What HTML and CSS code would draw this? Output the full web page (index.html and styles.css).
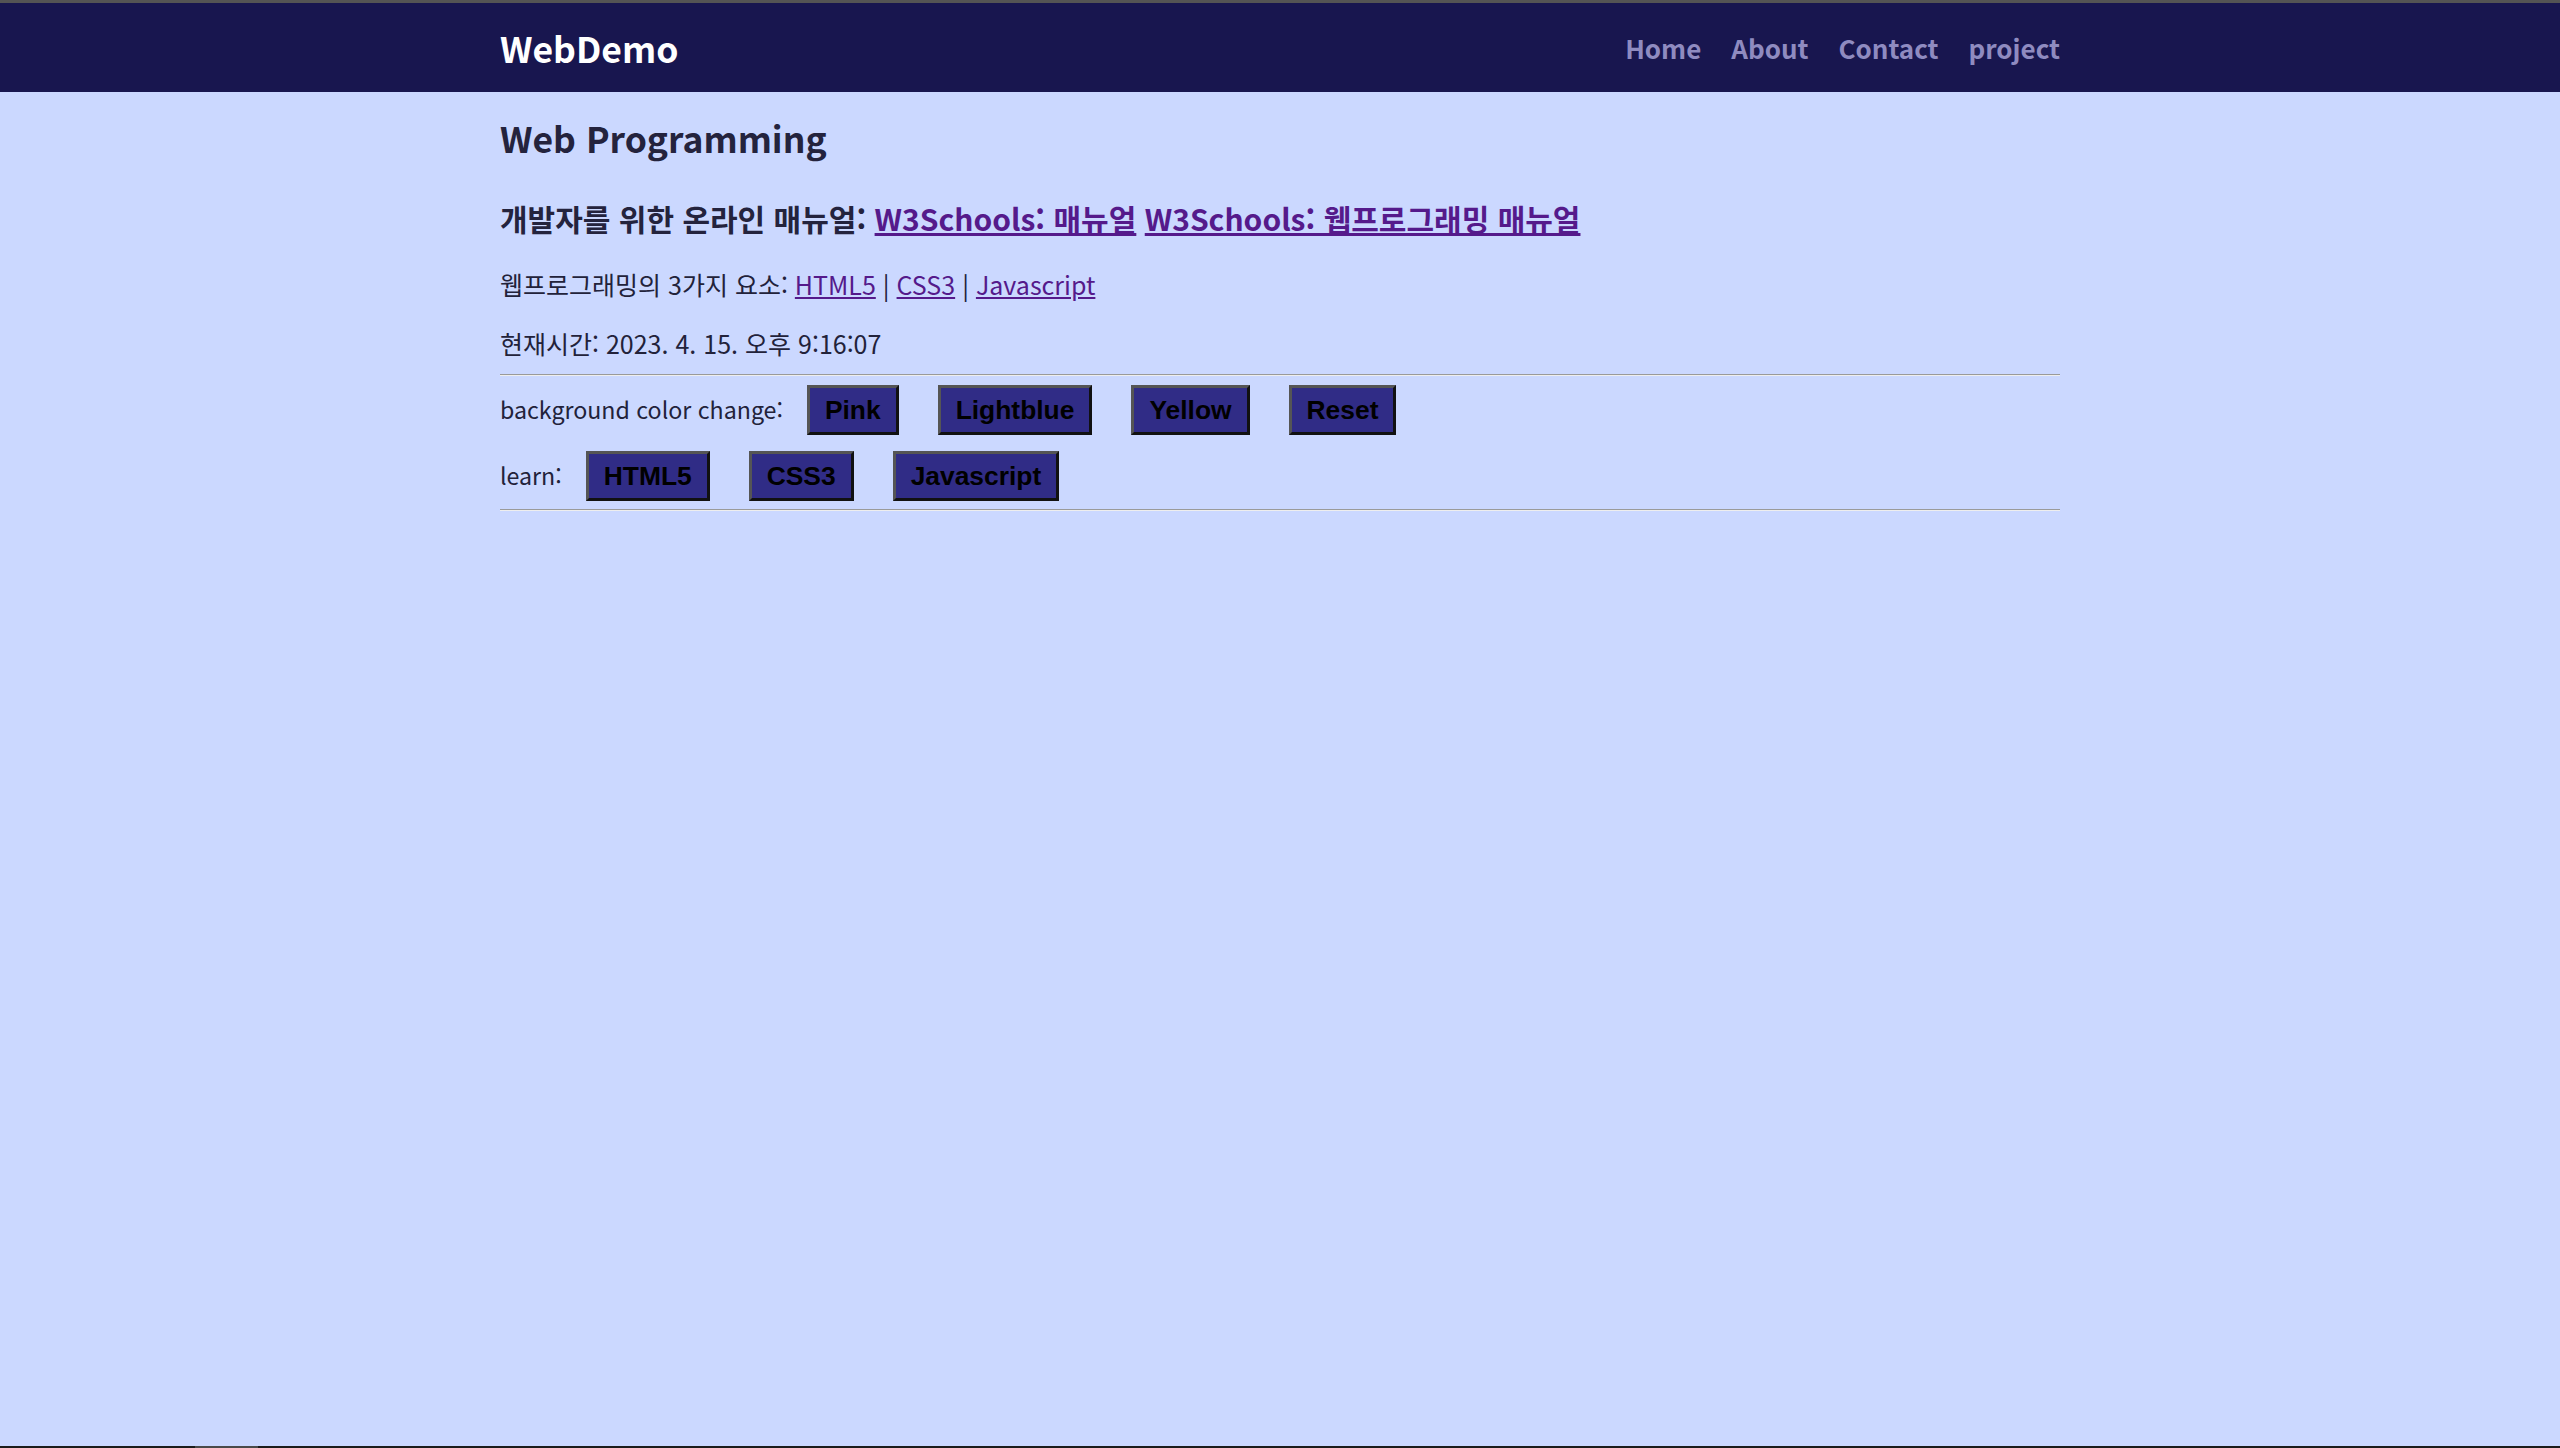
FILE: index.html
```html
<!DOCTYPE html>
<html lang="ko">
<head>
<meta charset="utf-8">
<title>WebDemo</title>
<link rel="stylesheet" href="styles.css">
</head>
<body>
<nav class="navbar">
  <div class="container nav-inner">
    <a class="brand" href="#">WebDemo</a>
    <ul class="nav-links">
      <li><a href="#">Home</a></li>
      <li><a href="#">About</a></li>
      <li><a href="#">Contact</a></li>
      <li><a href="#">project</a></li>
    </ul>
  </div>
</nav>
<main class="container content">
  <h1 class="title">Web Programming</h1>
  <h2 class="manual">개발자를 위한 온라인 매뉴얼: <a href="#">W3Schools: 매뉴얼</a> <a href="#">W3Schools: 웹프로그래밍 매뉴얼</a></h2>
  <p class="line elements">웹프로그래밍의 3가지 요소: <a href="#">HTML5</a> | <a href="#">CSS3</a> | <a href="#">Javascript</a></p>
  <p class="line time">현재시간: 2023. 4. 15. 오후 9:16:07</p>
  <hr class="rule">
  <div class="btn-row first-row">
    <span class="label">background color change:</span>
    <button class="btn">Pink</button>
    <button class="btn">Lightblue</button>
    <button class="btn">Yellow</button>
    <button class="btn">Reset</button>
  </div>
  <div class="btn-row second-row">
    <span class="label">learn:</span>
    <button class="btn">HTML5</button>
    <button class="btn">CSS3</button>
    <button class="btn">Javascript</button>
  </div>
  <hr class="rule bottom-rule">
</main>
<div class="screen-edge"><span class="edge-mark"></span></div>
</body>
</html>
```
FILE: styles.css
```css
html, body {
  margin: 0;
  padding: 0;
}
body {
  background: #cbd8ff;
  font-family: "Noto Sans CJK KR", "Noto Sans", sans-serif;
  color: #22223a;
  min-height: 1448px;
}
.container {
  width: 1560px;
  margin: 0 auto;
}
.navbar {
  background: #18164f;
  border-top: 3px solid #545454;
  height: 89px;
}
.nav-inner {
  height: 100%;
  display: flex;
  align-items: center;
  justify-content: space-between;
}
.brand {
  color: #ffffff;
  font-weight: 700;
  font-size: 35.5px;
  text-decoration: none;
}
.nav-links {
  list-style: none;
  margin: 0;
  padding: 0;
  display: flex;
  gap: 30px;
}
.nav-links a {
  color: #8f8bc0;
  font-weight: 700;
  font-size: 26px;
  text-decoration: none;
}
.title {
  font-size: 35.5px;
  line-height: 44px;
  font-weight: 700;
  margin: 24px 0 0;
  color: #24233d;
}
.manual {
  font-size: 30px;
  line-height: 40px;
  font-weight: 700;
  margin: 38px 0 0;
  color: #24233d;
}
a {
  color: #551a8b;
}
.line {
  font-size: 25px;
  line-height: 36px;
  margin: 0;
}
.elements {
  margin-top: 28px;
}
.time {
  margin-top: 23px;
}
.rule {
  margin: 13px 0 0;
  border: 0;
  border-top: 1px solid #9a9a9a;
  border-bottom: 1px solid #eeeeee;
  height: 0;
}
.btn-row {
  display: flex;
  align-items: baseline;
}
.first-row {
  margin-top: 9px;
}
.second-row {
  margin-top: 16px;
}
.bottom-rule {
  margin-top: 8px;
}
.label {
  font-size: 23.2px;
  line-height: 36px;
  margin-right: 24px;
}
.btn {
  font-family: "Liberation Sans", Arial, sans-serif;
  font-weight: 700;
  font-size: 26.4px;
  line-height: 30px;
  color: #000000;
  background: #302c86;
  border-style: solid;
  border-width: 3px;
  border-color: #555555 #111111 #111111 #555555;
  padding: 7px 15px;
  margin: 0;
  cursor: pointer;
}
.btn + .btn {
  margin-left: 39px;
}
.screen-edge {
  position: fixed;
  left: 0;
  right: 0;
  bottom: 0;
  height: 2px;
  background: #1c1c1c;
}
.edge-mark {
  position: absolute;
  left: 195px;
  width: 63px;
  top: 0;
  bottom: 0;
  background: #4a4a4a;
}
```
